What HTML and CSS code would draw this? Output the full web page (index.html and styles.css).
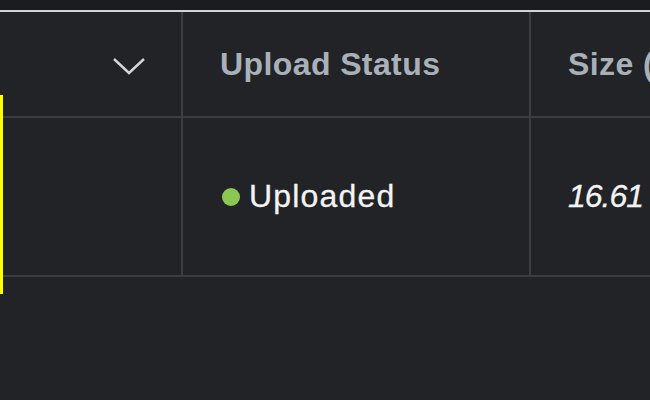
FILE: index.html
```html
<!DOCTYPE html>
<html lang="en">
<head>
<meta charset="utf-8">
<title>Uploads table</title>
<link rel="stylesheet" href="styles.css">
</head>
<body>
<div class="topbar"></div>
<div class="table">
  <div class="row head">
    <div class="cell c1">
      <svg class="chev" width="34" height="20" viewBox="0 0 34 20" aria-hidden="true">
        <polyline points="2,4 17,18 32,4" fill="none" stroke="#d4d5d7" stroke-width="2.4"/>
      </svg>
    </div>
    <div class="cell c2">Upload Status</div>
    <div class="cell c3">Size (MB)</div>
  </div>
  <div class="row data">
    <div class="cell c1"></div>
    <div class="cell c2"><span class="dot"></span><span class="status">Uploaded</span></div>
    <div class="cell c3 num">16.61</div>
  </div>
</div>
<div class="focus"></div>
</body>
</html>
```
FILE: styles.css
```css
html, body {
  margin: 0;
  padding: 0;
  width: 650px;
  height: 400px;
  overflow: hidden;
  background: #222326;
  font-family: "Liberation Sans", Arial, sans-serif;
}
.topbar {
  height: 10px;
  background: #1b1c1e;
  border-bottom: 2px solid #d2d3d6;
}
.row {
  display: grid;
  grid-template-columns: 183px 348px 1fr;
  border-bottom: 2px solid #3c3d41;
}
.head {
  height: 104px;
}
.data {
  height: 157px;
}
.cell {
  display: flex;
  align-items: center;
  border-right: 2px solid #3c3d41;
  padding-left: 37px;
  white-space: nowrap;
  overflow: hidden;
  font-size: 32px;
}
.c3 {
  border-right: none;
}
.c1 {
  justify-content: flex-end;
  padding-left: 0;
  padding-right: 35px;
}
.head .cell {
  font-weight: bold;
  color: #a9b0b8;
  letter-spacing: 0.4px;
}
.data .cell {
  color: #f3f3f3;
}
.head .c1 {
  padding-top: 2px;
}
.dot {
  width: 18px;
  height: 18px;
  border-radius: 50%;
  background: #8bc853;
  margin-right: 9px;
  flex: none;
}
.data .c2 {
  padding-left: 39px;
}
.status {
  letter-spacing: 1.2px;
  -webkit-text-stroke: 0.3px #f3f3f3;
}
.num {
  font-style: italic;
  letter-spacing: -1px;
  -webkit-text-stroke: 0.3px #f3f3f3;
}
.focus {
  position: absolute;
  left: 0;
  top: 95px;
  width: 3px;
  height: 199px;
  background: #ffff00;
}
```
